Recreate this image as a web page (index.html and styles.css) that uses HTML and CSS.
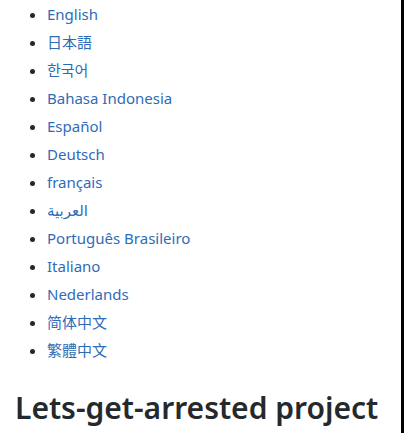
FILE: index.html
```html
<!DOCTYPE html>
<html lang="en">
<head>
    <meta charset="UTF-8">
    <meta name="viewport" content="width=device-width, initial-scale=1.0">
    <title>Lets-get-arrested project</title>
    <link rel="stylesheet" href="styles.css">
</head>
<body>
    <div class="page">
        <div class="markdown">
            <ul class="languages">
                <li><a href="#">English</a></li>
                <li><a href="#" class="ja" lang="ja">日本語</a></li>
                <li><a href="#" class="ko" lang="ko">한국어</a></li>
                <li><a href="#">Bahasa Indonesia</a></li>
                <li><a href="#">Español</a></li>
                <li><a href="#">Deutsch</a></li>
                <li><a href="#">français</a></li>
                <li><a href="#" class="ar" lang="ar">العربية</a></li>
                <li><a href="#">Português Brasileiro</a></li>
                <li><a href="#">Italiano</a></li>
                <li><a href="#">Nederlands</a></li>
                <li><a href="#" class="sc" lang="zh-Hans">简体中文</a></li>
                <li><a href="#" class="tc" lang="zh-Hant">繁體中文</a></li>
            </ul>

            <h1 class="title">Lets-get-arrested project</h1>
        </div>
        <div class="edge"></div>
    </div>
</body>
</html>
```

FILE: styles.css
```css
body {
    margin: 0;
    background-color: #ffffff;
    font-family: "Noto Sans", "Open Sans", sans-serif;
    font-size: 16px;
    line-height: 1.5;
    color: #24292e;
}
.page {
    display: flex;
    height: 433px;
    overflow: hidden;
}
.markdown {
    flex: 1;
    padding-left: 15px;
}
.edge {
    width: 3px;
    background-color: #000000;
}
.languages {
    margin: 2px 0 0 0;
    padding-left: 32px;
}
.languages li {
    height: 24px;
    margin-bottom: 4px;
    line-height: 24px;
    font-size: 15px;
}
.languages a {
    color: #2f6cb8;
    text-decoration: none;
}
.ja {
    font-family: "Noto Sans CJK JP", sans-serif;
}
.ko {
    font-family: "Noto Sans CJK KR", sans-serif;
}
.sc {
    font-family: "Noto Sans CJK SC", sans-serif;
}
.tc {
    font-family: "Noto Sans CJK TC", sans-serif;
}
.ar {
    font-family: "DejaVu Sans", sans-serif;
}
.title {
    margin: 26px 0 0 0;
    font-size: 30px;
    font-weight: 600;
    line-height: 40px;
}
```
